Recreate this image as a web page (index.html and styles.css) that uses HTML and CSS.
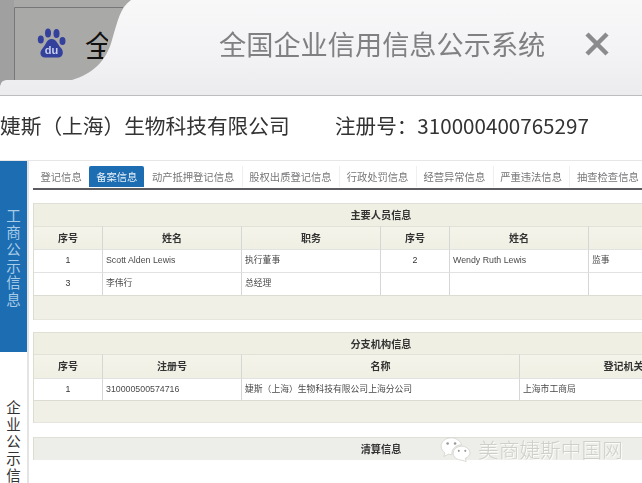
FILE: index.html
```html
<!DOCTYPE html>
<html lang="zh">
<head>
<meta charset="utf-8">
<title>全国企业信用信息公示系统</title>
<link rel="stylesheet" href="styles.css">
</head>
<body>
<div class="page">
  <header class="topbar">
    <div class="browser-tab">
      <svg class="tab-shape" width="135" height="86" viewBox="0 0 135 86">
        <path d="M0 0H131C120 8 118 20 112 40C106 62 92 74 72 80H6Q1 80 0 86Z" fill="#a9a9a8"/>
        <path d="M0 0H14V80H6Q1 80 0 86Z" fill="#a0a0a0"/>
        <path d="M14.5 80V7.5H123" fill="none" stroke="#77777a" stroke-width="1"/>
      </svg>
      <svg class="paw" width="30" height="32" viewBox="0 0 30 32">
        <ellipse cx="3.8" cy="11.5" rx="3" ry="4" fill="#33409c"/>
        <ellipse cx="11" cy="5" rx="3" ry="4.6" fill="#33409c"/>
        <ellipse cx="19.5" cy="5.5" rx="3" ry="4.6" fill="#33409c"/>
        <ellipse cx="25.5" cy="13" rx="3" ry="4" fill="#33409c"/>
        <path d="M14.5 11C20 11 20.500 17 24 20C27 23 26.500 29.500 21 29.500H8C3 29.500 2 24 5.500 20.500C9 17 9.500 11 14.500 11Z" fill="#33409c"/>
        <text class="paw-text" x="14.500" y="26" text-anchor="middle">du</text>
      </svg>
      <span class="tab-title">全</span>
    </div>
    <h1 class="site-title">全国企业信用信息公示系统</h1>
    <svg class="close" width="26" height="26" viewBox="0 0 26 26">
      <path d="M3 3L23 23M23 3L3 23" stroke="#8b8b8d" stroke-width="4.500" fill="none"/>
    </svg>
  </header>

  <div class="company">
    <span class="company-name">婕斯（上海）生物科技有限公司</span>
    <span class="company-reg">注册号：310000400765297</span>
  </div>

  <main class="main">
    <aside class="side">
      <div class="side-item side-item-active"><div>工<br>商<br>公<br>示<br>信<br>息</div></div>
      <div class="side-item side-item-plain">企<br>业<br>公<br>示<br>信<br>息</div>
    </aside>
    <div class="content">
      <nav class="tabs">
        <span class="tab">登记信息</span>
        <span class="tab tab-active">备案信息</span>
        <span class="tab">动产抵押登记信息</span>
        <span class="tab">股权出质登记信息</span>
        <span class="tab">行政处罚信息</span>
        <span class="tab">经营异常信息</span>
        <span class="tab">严重违法信息</span>
        <span class="tab">抽查检查信息</span>
      </nav>

      <section class="block block-first">
        <div class="block-title">主要人员信息</div>
        <div class="grid grid-people">
          <div class="th">序号</div><div class="th">姓名</div><div class="th">职务</div><div class="th">序号</div><div class="th">姓名</div><div class="th">职务</div>
          <div class="td td-c">1</div><div class="td">Scott Alden Lewis</div><div class="td">执行董事</div><div class="td td-c">2</div><div class="td">Wendy Ruth Lewis</div><div class="td">监事</div>
          <div class="td td-c">3</div><div class="td">李伟行</div><div class="td">总经理</div><div class="td"></div><div class="td"></div><div class="td"></div>
        </div>
        <div class="block-foot block-foot-first"></div>
      </section>

      <section class="block">
        <div class="block-title block-title-second">分支机构信息</div>
        <div class="grid grid-branch">
          <div class="th">序号</div><div class="th">注册号</div><div class="th">名称</div><div class="th">登记机关</div>
          <div class="td td-c">1</div><div class="td">310000500574716</div><div class="td">婕斯（上海）生物科技有限公司上海分公司</div><div class="td">上海市工商局</div>
        </div>
        <div class="block-foot"></div>
      </section>

      <section class="block block-last">
        <div class="block-title block-title-last">清算信息</div>
      </section>
    </div>
  </main>

  <div class="watermark">
    <svg class="wechat" width="32" height="26" viewBox="0 0 34 28">
      <path d="M12 2C5 2 1 6.500 1 11C1 14 3 16.500 5 18L4 22L9 19.500C10 20 11 20 12.500 20C12 14 17 9.500 23 9.500C21.500 5 17 2 12 2Z" fill="#fff" stroke="#cfcfca" stroke-width=".8"/>
      <path d="M23 11C18 11 14 14.500 14 18.500C14 22.500 18 26 23 26L28 27.500L27 24C30 22.500 32 21 32 18.500C32 14.500 28 11 23 11Z" fill="#fff" stroke="#cfcfca" stroke-width=".8"/>
      <circle cx="8" cy="8" r="1.400" fill="#999"/><circle cx="16" cy="8" r="1.400" fill="#999"/>
      <circle cx="20" cy="16" r="1.100" fill="#999"/><circle cx="27" cy="16" r="1.100" fill="#999"/>
    </svg>
    <span class="watermark-text">美商婕斯中国网</span>
  </div>
</div>
</body>
</html>
```

FILE: styles.css
```css
* { box-sizing: border-box; }
html, body { margin: 0; padding: 0; background: #fff; }
.page {
  position: relative;
  width: 642px;
  height: 483px;
  overflow: hidden;
  font-family: "Noto Sans CJK SC", "Noto Sans", sans-serif;
}

/* top bar */
.topbar {
  position: relative;
  height: 96px;
  display: flex;
  align-items: center;
  background: linear-gradient(#f8f8f9, #f3f3f5 55%, #ececee);
  border-bottom: 1px solid #bdbdbf;
}
.browser-tab { position: absolute; left: 0; top: 0; width: 135px; height: 86px; overflow: hidden; }
.tab-shape { position: absolute; left: 0; top: 0; }
.paw { position: absolute; left: 37px; top: 28px; filter: blur(.4px); }
.paw-text { font: 700 11px "Liberation Sans", sans-serif; fill: #c8d0ee; }
.tab-title {
  position: absolute;
  left: 85px;
  top: 22px;
  width: 32px;
  clip-path: polygon(0 0, 28px 0, 16px 100%, 0 100%);
  font-size: 30px;
  line-height: 44px;
  color: #111;
}
.site-title {
  margin: -10px 0 0 219px;
  font-size: 27.2px;
  font-weight: 400;
  line-height: 40px;
  color: #808083;
  white-space: nowrap;
  filter: blur(.3px);
}
.close { margin: -8px 0 0 39px; flex: none; }

/* company line */
.company {
  height: 62px;
  display: flex;
  align-items: center;
  padding-bottom: 5px;
  background: #fff;
  font-size: 20.700px;
  color: #333;
  white-space: nowrap;
  filter: blur(.3px);
}
.company-name { width: 335px; flex: none; }
.company-reg { font-size: 20.600px; }

/* main */
.main { display: flex; margin-top: 2px; height: 325px; border-top: 1px solid #e6e6e6; }
.side {
  width: 29px;
  flex: none;
  display: flex;
  flex-direction: column;
  border-right: 2px solid #e4e4e4;
}
.side-item { text-align: center; font-size: 14.500px; line-height: 16.900px; flex: none; }
.side-item-active {
  height: 191px;
  display: flex;
  align-items: center;
  justify-content: center;
  padding-top: 2px;
  background: #1c6db2;
  color: #a6cbe6;
}
.side-item-plain { padding-top: 47px; color: #333; }

.content { flex: 1; min-width: 0; padding-left: 4px; }

.tabs {
  display: flex;
  height: 29px;
  padding-top: 5px;
  border-bottom: 2px solid #5c5c60;
  white-space: nowrap;
  filter: blur(.4px);
}
.tab {
  flex: none;
  height: 21px;
  padding: 0 7.500px;
  font-size: 10.300px;
  line-height: 21px;
  color: #77777a;
  border-right: 1px solid #efefef;
  margin-right: -1px;
}
.tab-active { background: #1c6db2; color: #e6f0f8; border-radius: 2px 2px 0 0; border-right: 0; margin-right: 0; padding: 0 7px; }

/* data blocks */
.block { margin-top: 12px; width: 695px; border-left: 1px solid #dcdcd2; filter: blur(.4px); }
.block-first { margin-top: 13px; }
.block-last { margin-top: 14px; }
.block-title {
  height: 23px;
  background: #efefe3;
  border-top: 1px solid #e0e0d6;
  font-size: 10.200px;
  font-weight: 700;
  line-height: 22px;
  text-align: center;
  color: #333;
}
.block-title-second { height: 22px; line-height: 21px; }
.block-title-last { background: #ededea; }
.block-foot { height: 23px; background: #f0f0e6; border-top: 1px solid #dcdcd4; border-bottom: 1px solid #e6e6de; }
.block-foot-first { height: 25px; }
.grid { display: grid; }
.grid-people { grid-template-columns: 69px 139px 139px 69px 139px 139px; grid-auto-rows: 23px; }
.grid-branch { grid-template-columns: 69px 139px 278px 208px; grid-template-rows: 24px 22px; }
.th, .td {
  overflow: hidden;
  white-space: nowrap;
  border-right: 1px solid #d6d6d6;
  font-size: 8.600px;
}
.th {
  background: linear-gradient(#f4f4ea, #efefe4);
  border-top: 1px solid #e2e2d8;
  text-align: center;
  font-size: 10px;
  font-weight: 700;
  line-height: 22px;
  color: #333;
}
.td {
  background: #fff;
  border-top: 1px solid #e2e2e2;
  padding-left: 3px;
  line-height: 21px;
  color: #4a4a4a;
}
.grid-people .td:nth-child(n+7),
.grid-branch .td { font-family: "Liberation Sans", "Noto Sans CJK SC", sans-serif; font-size: 8.800px; }
.td-c { text-align: center; padding-left: 0; color: #333; }

/* watermark, laid over the last block */
.watermark {
  position: absolute;
  left: 440px;
  top: 435px;
  display: flex;
  align-items: center;
  gap: 6px;
  filter: blur(.4px);
}
.wechat { flex: none; }
.watermark-text {
  font-size: 20.700px;
  font-weight: 300;
  line-height: 28px;
  color: #cfcfca;
  text-shadow: 1px 1px 0 rgba(255, 255, 255, .8);
  white-space: nowrap;
}
```
